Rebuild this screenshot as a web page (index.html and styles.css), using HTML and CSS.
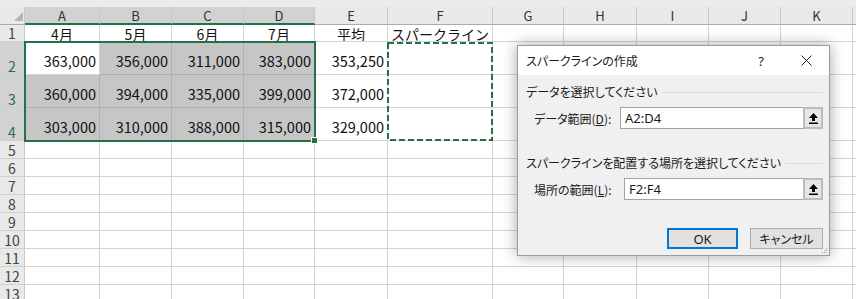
FILE: index.html
```html
<!DOCTYPE html>
<html lang="ja">
  <head>
    <meta charset="utf-8">
    <title>スパークラインの作成</title>
    <link rel="stylesheet" href="styles.css">
  </head>
  <body>
    <div class="sheet grid">
      <div class="strip"></div>

      <div class="corner"><svg width="9" height="9"><polygon points="9,0 9,9 0,9" fill="#b4b4b4"/></svg></div>
      <div class="ch sel">A</div><div class="ch sel">B</div><div class="ch sel">C</div><div class="ch sel">D</div>
      <div class="ch">E</div><div class="ch">F</div><div class="ch">G</div><div class="ch">H</div>
      <div class="ch">I</div><div class="ch">J</div><div class="ch">K</div><div class="ch"></div>

      <div class="rh">1</div>
      <div class="c">4月</div><div class="c">5月</div><div class="c">6月</div><div class="c">7月</div>
      <div class="c">平均</div><div class="c">スパークライン</div>
      <div class="c"></div><div class="c"></div><div class="c"></div><div class="c"></div><div class="c"></div><div class="c"></div>

      <div class="rh sel">2</div>
      <div class="c num">363,000</div><div class="c num s">356,000</div><div class="c num s">311,000</div><div class="c num s">383,000</div>
      <div class="c num">353,250</div><div class="c"></div>
      <div class="c"></div><div class="c"></div><div class="c"></div><div class="c"></div><div class="c"></div><div class="c"></div>

      <div class="rh sel">3</div>
      <div class="c num s">360,000</div><div class="c num s">394,000</div><div class="c num s">335,000</div><div class="c num s">399,000</div>
      <div class="c num">372,000</div><div class="c"></div>
      <div class="c"></div><div class="c"></div><div class="c"></div><div class="c"></div><div class="c"></div><div class="c"></div>

      <div class="rh sel">4</div>
      <div class="c num s">303,000</div><div class="c num s">310,000</div><div class="c num s">388,000</div><div class="c num s">315,000</div>
      <div class="c num">329,000</div><div class="c"></div>
      <div class="c"></div><div class="c"></div><div class="c"></div><div class="c"></div><div class="c"></div><div class="c"></div>

      <div class="rh">5</div>
      <div class="c"></div><div class="c"></div><div class="c"></div><div class="c"></div><div class="c"></div><div class="c"></div>
      <div class="c"></div><div class="c"></div><div class="c"></div><div class="c"></div><div class="c"></div><div class="c"></div>
      <div class="rh">6</div>
      <div class="c"></div><div class="c"></div><div class="c"></div><div class="c"></div><div class="c"></div><div class="c"></div>
      <div class="c"></div><div class="c"></div><div class="c"></div><div class="c"></div><div class="c"></div><div class="c"></div>
      <div class="rh">7</div>
      <div class="c"></div><div class="c"></div><div class="c"></div><div class="c"></div><div class="c"></div><div class="c"></div>
      <div class="c"></div><div class="c"></div><div class="c"></div><div class="c"></div><div class="c"></div><div class="c"></div>
      <div class="rh">8</div>
      <div class="c"></div><div class="c"></div><div class="c"></div><div class="c"></div><div class="c"></div><div class="c"></div>
      <div class="c"></div><div class="c"></div><div class="c"></div><div class="c"></div><div class="c"></div><div class="c"></div>
      <div class="rh">9</div>
      <div class="c"></div><div class="c"></div><div class="c"></div><div class="c"></div><div class="c"></div><div class="c"></div>
      <div class="c"></div><div class="c"></div><div class="c"></div><div class="c"></div><div class="c"></div><div class="c"></div>
      <div class="rh">10</div>
      <div class="c"></div><div class="c"></div><div class="c"></div><div class="c"></div><div class="c"></div><div class="c"></div>
      <div class="c"></div><div class="c"></div><div class="c"></div><div class="c"></div><div class="c"></div><div class="c"></div>
      <div class="rh">11</div>
      <div class="c"></div><div class="c"></div><div class="c"></div><div class="c"></div><div class="c"></div><div class="c"></div>
      <div class="c"></div><div class="c"></div><div class="c"></div><div class="c"></div><div class="c"></div><div class="c"></div>
      <div class="rh">12</div>
      <div class="c"></div><div class="c"></div><div class="c"></div><div class="c"></div><div class="c"></div><div class="c"></div>
      <div class="c"></div><div class="c"></div><div class="c"></div><div class="c"></div><div class="c"></div><div class="c"></div>
      <div class="rh">13</div>
      <div class="c"></div><div class="c"></div><div class="c"></div><div class="c"></div><div class="c"></div><div class="c"></div>
      <div class="c"></div><div class="c"></div><div class="c"></div><div class="c"></div><div class="c"></div><div class="c"></div>

      <!-- selection marks drawn on top of the cells -->
      <div class="marks grid">
        <div class="range"><span class="handle"></span></div>
        <div class="ants">
          <svg width="106" height="99"><rect x="1" y="1" width="104" height="97" fill="none" stroke="#217346" stroke-width="2" stroke-dasharray="6 3"/></svg>
        </div>
      </div>
    </div>

    <div class="dialog">
      <div class="titlebar">
        <span class="title">スパークラインの作成</span>
        <span class="help">?</span>
        <span class="close"><svg width="11" height="11"><path d="M0.5 0.5 L10.5 10.5 M10.5 0.5 L0.5 10.5" stroke="#222" stroke-width="1"/></svg></span>
      </div>
      <div class="dbody">
        <div class="group-title">データを選択してください</div>
        <div class="field">
          <span class="label l1">データ範囲(<u>D</u>):</span>
          <span class="input">A2:D4</span>
          <span class="pick"><svg width="9" height="11"><path d="M4.5 0 L9 5 H6 V8 H3 V5 H0 Z" fill="#000"/><rect x="0" y="9.5" width="9" height="1.5" fill="#000"/></svg></span>
        </div>

        <div class="group-title second">スパークラインを配置する場所を選択してください</div>
        <div class="field">
          <span class="label l2">場所の範囲(<u>L</u>):</span>
          <span class="input">F2:F4</span>
          <span class="pick"><svg width="9" height="11"><path d="M4.5 0 L9 5 H6 V8 H3 V5 H0 Z" fill="#000"/><rect x="0" y="9.5" width="9" height="1.5" fill="#000"/></svg></span>
        </div>

        <div class="actions">
          <span class="btn default ok">OK</span>
          <span class="btn">キャンセル</span>
        </div>
      </div>
      <svg class="grip" width="6" height="6"><rect x="4" y="0" width="1" height="1" fill="#a0a0a0"/><rect x="2" y="2" width="1" height="1" fill="#a0a0a0"/><rect x="4" y="2" width="1" height="1" fill="#a0a0a0"/><rect x="0" y="4" width="1" height="1" fill="#a0a0a0"/><rect x="2" y="4" width="1" height="1" fill="#a0a0a0"/><rect x="4" y="4" width="1" height="1" fill="#a0a0a0"/></svg>
    </div>
  </body>
</html>
```

FILE: styles.css
```css
html, body {
  margin: 0;
  padding: 0;
  background-color: #fff;
}

body {
  position: relative;
  width: 856px;
  height: 299px;
  overflow: hidden;
  font-family: "Noto Sans CJK JP", sans-serif;
}

.grid {
  display: grid;
  grid-template-columns: 25px 75px 72px 72px 71px 73px 105px 71px 73px 72px 72px 72px 1fr;
  grid-template-rows: 7px 18px 17px 33px 33px 33px repeat(9, 18px);
}

.sheet {
  position: relative;
}

.strip {
  grid-column: 1 / -1;
  background-color: #ebebeb;
}

.corner {
  display: flex;
  align-items: flex-end;
  justify-content: flex-end;
  padding: 0 1px 3px 0;
  background-color: #e9e9e9;
  border-right: 1px solid #c8c8c8;
  border-bottom: 1px solid #ababab;
}

.ch {
  overflow: hidden;
  padding-top: 1px;
  background-color: #e9e9e9;
  border-right: 1px solid #c8c8c8;
  border-bottom: 1px solid #ababab;
  font-size: 13px;
  line-height: 16px;
  text-align: center;
  color: #333;
}

.ch.sel {
  background-color: #d2d2d2;
  border-bottom: 2px solid #217346;
  line-height: 15px;
}

.rh {
  display: flex;
  align-items: flex-end;
  justify-content: center;
  background-color: #e9e9e9;
  border-right: 1px solid #c8c8c8;
  border-bottom: 1px solid #d0d0d0;
  font-size: 14px;
  line-height: 16px;
  color: #444;
}

.rh.sel {
  background-color: #d2d2d2;
  color: #2f6a4c;
}

.c {
  display: flex;
  align-items: center;
  justify-content: center;
  overflow: hidden;
  padding: 2px 3px 0;
  border-right: 1px solid #d4d4d4;
  border-bottom: 1px solid #d4d4d4;
  font-size: 14px;
  line-height: 15px;
  color: #111;
  white-space: nowrap;
}

.c.num {
  justify-content: flex-end;
  align-items: flex-end;
  padding: 0 3px 6px;
  font-size: 14.5px;
}

.c.s {
  background-color: #c6c6c6;
  border-color: #b0b0b0;
}

/* overlay layer with the same tracks as the sheet */
.marks {
  position: absolute;
  inset: 0;
  pointer-events: none;
}

.range {
  position: relative;
  grid-column: 2 / 6;
  grid-row: 4 / 7;
  margin: -1px -1px -1px -1px;
  border: 2px solid #217346;
}

.handle {
  position: absolute;
  right: -4px;
  bottom: -4px;
  width: 5px;
  height: 5px;
  background-color: #217346;
  border: 1px solid #fff;
}

.ants {
  grid-column: 7 / 8;
  grid-row: 4 / 7;
  margin-left: -1px;
}

.ants svg {
  display: block;
}

/* dialog */
.dialog {
  position: absolute;
  left: 517px;
  top: 45px;
  width: 313px;
  height: 211px;
  box-sizing: border-box;
  display: flex;
  flex-direction: column;
  border: 1px solid #9b9b9b;
  background-color: #f0f0f0;
  box-shadow: 0 0 14px rgba(0, 0, 0, 0.35);
  font-size: 12px;
  font-feature-settings: "palt";
  color: #1a1a1a;
}

.titlebar {
  display: flex;
  align-items: center;
  height: 29px;
  padding-left: 8px;
  background-color: #fff;
}

.title {
  flex: 1;
}

.help {
  width: 44px;
  text-align: center;
  font-family: "Noto Sans", sans-serif;
  font-size: 13px;
}

.close {
  display: flex;
  align-items: center;
  justify-content: center;
  width: 46px;
  height: 29px;
}

.dbody {
  display: flex;
  flex-direction: column;
  padding: 9px 6px 0 8px;
}

.group-title {
  display: flex;
  align-items: center;
  gap: 4px;
  line-height: 16px;
}

.group-title::after {
  content: "";
  flex: 1;
  height: 1px;
  background-color: #dcdcdc;
}

.group-title.second {
  margin-top: 26px;
}

.field {
  display: flex;
  align-items: center;
  height: 22px;
  margin: 7px 0 0 8px;
}

.label.l1 {
  width: 86px;
}

.label.l2 {
  width: 90px;
}

.input {
  flex: 1;
  height: 22px;
  box-sizing: border-box;
  padding-left: 4px;
  border: 1px solid #a3a3a3;
  border-right: none;
  background-color: #fff;
  font-family: "Noto Sans", sans-serif;
  font-size: 13px;
  line-height: 20px;
}

.pick {
  display: flex;
  align-items: center;
  justify-content: center;
  width: 20px;
  height: 22px;
  box-sizing: border-box;
  border: 2px solid #bcbcbc;
  background-color: #e6e6e6;
}

.actions {
  display: flex;
  justify-content: flex-end;
  gap: 12px;
  margin-top: 28px;
}

.btn {
  display: flex;
  align-items: center;
  justify-content: center;
  width: 73px;
  height: 21px;
  box-sizing: border-box;
  border: 1px solid #adadad;
  background-color: #e1e1e1;
}

.btn.default {
  width: 71px;
  border: 2px solid #0078d7;
}

.ok {
  font-family: "Noto Sans", sans-serif;
  font-size: 13px;
}

.grip {
  position: absolute;
  right: 1px;
  bottom: 1px;
}
```
